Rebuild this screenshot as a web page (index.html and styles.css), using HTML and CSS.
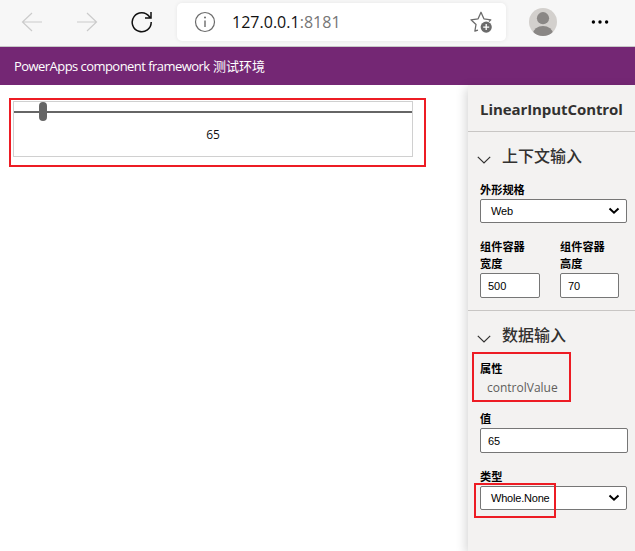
FILE: index.html
```html
<!DOCTYPE html>
<html lang="zh-CN">
<head>
<meta charset="utf-8">
<title>PowerApps component framework</title>
<link rel="stylesheet" href="styles.css">
</head>
<body>
<div class="toolbar">
  <svg class="nav" width="22" height="22" viewBox="0 0 22 22" stroke="#cbcbcb"><path d="M21 11H1.5M11 2L1.5 11L11 20"/></svg>
  <svg class="nav forward" width="22" height="22" viewBox="0 0 22 22" stroke="#cbcbcb"><path d="M1 11H20.5M11 2L20.5 11L11 20"/></svg>
  <svg class="nav reload" width="22" height="22" viewBox="0 0 22 22" stroke="#111"><path d="M20.2 11A9.5 9.5 0 1 1 18.5 5.8L20 7M20 1V7H14" stroke-width="1.5"/></svg>
  <div class="address">
    <svg width="22" height="22" viewBox="0 0 22 22" fill="none" stroke="#6b6b6b"><circle cx="11" cy="11" r="9.5" stroke-width="1.2"/><path d="M11 9.5V16" stroke-width="1.4"/><circle cx="11" cy="6.4" r="1" fill="#6b6b6b" stroke="none"/></svg>
    <span class="url">127.0.0.1<span class="port">:8181</span></span>
    <svg class="star" width="24" height="24" viewBox="0 0 24 24" fill="none"><path d="M9 20.2L5.9 21L7 14.5L2 9.8L9.1 8.8L12 2.3L14.9 8.8L21.8 9.8L20 11.5" stroke="#6b6b6b" stroke-width="1.3" stroke-linejoin="round"/><circle cx="17.2" cy="17.1" r="5.6" fill="#6b6b6b"/><path d="M14.2 17.1H20.2M17.2 14.1V20.1" stroke="#fff" stroke-width="1.3"/></svg>
  </div>
  <svg class="avatar" width="28" height="28" viewBox="0 0 28 28"><defs><clipPath id="disc"><circle cx="14" cy="14" r="14"/></clipPath></defs><g clip-path="url(#disc)"><rect width="28" height="28" fill="#d3d0cd"/><circle cx="14" cy="10.2" r="6.1" fill="#8a8785"/><ellipse cx="14" cy="26" rx="10" ry="8" fill="#8a8785"/></g></svg>
  <svg class="more" width="18" height="4" viewBox="0 0 18 4"><circle cx="2.4" cy="2" r="1.7"/><circle cx="9" cy="2" r="1.7"/><circle cx="15.6" cy="2" r="1.7"/></svg>
</div>
<header class="banner"><span class="brand">PowerApps component framework</span><span class="env">测试环境</span></header>
<div class="workspace">
  <main class="stage">
    <div class="control">
      <div class="track"><div class="thumb"></div></div>
      <div class="reading">65</div>
    </div>
    <div class="mark mark-control"></div>
  </main>
  <aside class="panel">
    <h1>LinearInputControl</h1>
    <section class="context">
      <h2><svg width="14" height="8" viewBox="0 0 14 8"><path d="M.8.8L7 7L13.2.8"/></svg>上下文输入</h2>
      <div class="label">外形规格</div>
      <div class="box select">Web<svg width="12" height="8" viewBox="0 0 12 8"><path d="M1.5 1.5L6 5.7L10.5 1.5"/></svg></div>
      <div class="pair">
        <div><div class="label">组件容器<br>宽度</div><div class="box">500</div></div>
        <div><div class="label">组件容器<br>高度</div><div class="box height">70</div></div>
      </div>
    </section>
    <section class="data">
      <h2><svg width="14" height="8" viewBox="0 0 14 8"><path d="M.8.8L7 7L13.2.8"/></svg>数据输入</h2>
      <div class="label">属性</div>
      <div class="property"><span>controlValue</span></div>
      <div class="label">值</div>
      <div class="box value">65</div>
      <div class="label kind">类型</div>
      <div class="box select">Whole.None<svg width="12" height="8" viewBox="0 0 12 8"><path d="M1.5 1.5L6 5.7L10.5 1.5"/></svg></div>
    </section>
    <div class="mark mark-property"></div>
    <div class="mark mark-type"></div>
  </aside>
</div>
</body>
</html>
```

FILE: styles.css
```css
* { box-sizing: border-box; }
body {
  margin: 0;
  width: 635px;
  height: 551px;
  overflow: hidden;
  background: #fff;
  font-family: "Open Sans", "Noto Sans CJK SC", sans-serif;
}
svg { display: block; flex: none; }
.toolbar {
  display: flex;
  align-items: center;
  height: 47px;
  padding: 0 26px 3px 21px;
  background: #f7f7f7;
  border-bottom: 1px solid #c8c8c8;
}
.nav { fill: none; stroke-width: 1.2; }
.forward { margin-left: 33px; }
.reload { margin-left: 33px; }
.address {
  display: flex;
  align-items: center;
  width: 329px;
  height: 38px;
  margin-left: 24px;
  padding: 0 13px 0 17px;
  background: #fff;
  border-radius: 5px;
  box-shadow: 0 0 4px rgba(0, 0, 0, .07);
}
.url {
  margin-left: 16px;
  font-size: 16px;
  line-height: 24px;
  letter-spacing: .02px;
  color: #111;
}
.port { color: #767676; }
.star { margin-left: auto; }
.avatar { margin-left: 23px; }
.more { margin-left: auto; }
.banner {
  display: flex;
  gap: 4px;
  align-items: center;
  height: 38px;
  padding-left: 14px;
  background: #742774;
  color: #fff;
  font-size: 13px;
}
.brand { width: 195px; white-space: nowrap; letter-spacing: -.55px; }
.env { margin-top: -1px; }
.workspace { display: flex; height: 466px; }
.stage { position: relative; width: 468px; padding: 16px 0 0 13px; }
.control { width: 400px; height: 56px; border: 1px solid #d0d0d0; }
.track { height: 20px; padding-left: 25px; background: linear-gradient(#666, #666) 0 9px / 100% 2px no-repeat; }
.thumb { width: 8px; height: 19px; border-radius: 4px; background: #666; }
.reading { text-align: center; font-size: 12px; line-height: 26px; color: #111; }
.panel {
  position: relative;
  width: 167px;
  background: #f3f2f1;
  box-shadow: -2px 3px 10px rgba(0, 0, 0, .17);
}
h1 {
  margin: 0;
  height: 47px;
  padding: 2px 0 0 12px;
  border-bottom: 1px solid #c8c6c4;
  font-size: 15px;
  font-weight: 700;
  line-height: 45px;
  letter-spacing: -.08px;
  color: #323130;
}
section { padding-left: 12px; }
.context { height: 179px; padding-top: 11px; border-bottom: 1px solid #c8c6c4; }
.data { padding-top: 11px; }
h2 {
  display: flex;
  align-items: center;
  gap: 11px;
  margin: 0 0 0 -3px;
  height: 26px;
  font-size: 16px;
  font-weight: 500;
  line-height: 26px;
  color: #323130;
}
h2 svg { margin-top: 8px; fill: none; stroke: #323130; stroke-width: 1.2; }
.label { font-size: 11.2px; font-weight: 700; line-height: 17px; color: #000; }
h2 + .label { margin-top: 12px; }
.box {
  display: flex;
  align-items: center;
  width: 60px;
  height: 25px;
  padding-left: 7px;
  border: 1px solid #767676;
  border-radius: 2px;
  background: #fff;
  font-family: "Liberation Sans", sans-serif;
  font-size: 11px;
  color: #000;
}
.height { width: 59px; }
.select { width: 147px; height: 24px; margin-top: 1px; padding: 0 6px 0 10px; letter-spacing: -.2px; }
.select svg { margin-left: auto; fill: none; stroke: #000; stroke-width: 2; }
.pair { display: flex; gap: 20px; margin-top: 15px; }
.pair .box { margin-top: 1px; }
.property {
  height: 33px;
  padding-left: 7px;
  font-size: 12px;
  line-height: 22px;
  color: #605e5c;
}
.value { width: 148px; margin-top: 1px; }
.kind { margin-top: 15px; }
.mark { position: absolute; border: 2px solid #ed1c24; }
.mark-control { left: 9px; top: 13px; width: 417px; height: 69px; }
.mark-property { left: 4px; top: 267px; width: 99px; height: 50px; }
.mark-type { left: 6px; top: 398px; width: 82px; height: 35px; }
```
